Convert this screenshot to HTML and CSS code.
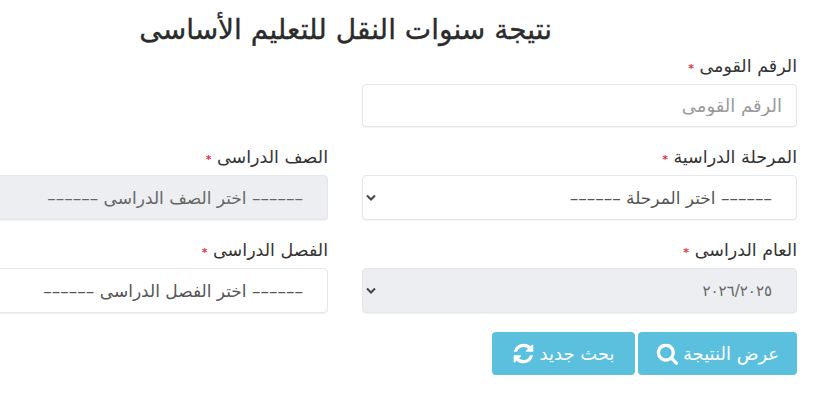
FILE: index.html
```html
<!DOCTYPE html>
<html lang="ar" dir="rtl">
  <head>
    <meta charset="UTF-8" />
    <title>نتيجة سنوات النقل للتعليم الأساسى</title>
    <link rel="stylesheet" href="styles.css">
  </head>
  <body>
    <form class="result-form">
      <h1 class="title">نتيجة سنوات النقل للتعليم الأساسى</h1>
      <div class="fields">
        <!-- الرقم القومى -->
        <div class="field">
          <label>الرقم القومى <span class="req">*</span></label>
          <input class="control" type="text" placeholder="الرقم القومى">
        </div>
        <div class="field"></div>

        <!-- المرحلة / الصف -->
        <div class="field">
          <label>المرحلة الدراسية <span class="req">*</span></label>
          <div class="select-wrap">
            <select class="control tall">
              <option>–––––– اختر المرحلة ––––––</option>
            </select>
            <svg class="chevron" viewBox="0 0 10 7"><path d="M1 1.500 5 5.500 9 1.500" /></svg>
          </div>
        </div>
        <div class="field">
          <label>الصف الدراسى <span class="req">*</span></label>
          <select class="control tall" disabled>
            <option>–––––– اختر الصف الدراسى ––––––</option>
          </select>
        </div>

        <!-- العام / الفصل -->
        <div class="field">
          <label>العام الدراسى <span class="req">*</span></label>
          <div class="select-wrap">
            <select class="control tall year" disabled>
              <option>٢٠٢٦/٢٠٢٥</option>
            </select>
            <svg class="chevron" viewBox="0 0 10 7"><path d="M1 1.500 5 5.500 9 1.500" /></svg>
          </div>
        </div>
        <div class="field">
          <label>الفصل الدراسى <span class="req">*</span></label>
          <select class="control tall">
            <option>–––––– اختر الفصل الدراسى ––––––</option>
          </select>
        </div>
      </div>

      <div class="actions">
        <button class="btn show" type="button">
          عرض النتيجة
          <svg class="icon" viewBox="0 0 1792 1792"><path d="M1216 832q0-185-131.500-316.500t-316.500-131.500-316.500 131.500-131.500 316.500 131.500 316.500 316.500 131.500 316.500-131.500 131.500-316.500zm512 832q0 52-38 90t-90 38q-54 0-90-38l-343-342q-179 124-399 124-143 0-273.500-55.500t-225-150-150-225-55.500-273.500 55.500-273.500 150-225 225-150 273.500-55.500 273.500 55.500 225 150 150 225 55.500 273.500q0 220-124 399l343 343q37 37 37 90z" /></svg>
        </button>
        <button class="btn reset" type="button">
          بحث جديد
          <svg class="icon" viewBox="0 0 1792 1792"><path d="M1639 1056q0 5-1 7-64 268-268 434.500t-478 166.500q-146 0-282.500-55t-243.500-157l-129 129q-19 19-45 19t-45-19-19-45v-448q0-26 19-45t45-19h448q26 0 45 19t19 45-19 45l-137 137q71 66 161 102t187 36q134 0 250-65t186-179q11-17 53-117 8-23 30-23h192q13 0 22.500 9.500t9.500 22.500zm25-800v448q0 26-19 45t-45 19h-448q-26 0-45-19t-19-45 19-45l138-138q-148-137-349-137-134 0-250 65t-186 179q-11 17-53 117-8 23-30 23h-199q-13 0-22.500-9.500t-9.500-22.500v-7q65-268 270-434.500t480-166.500q146 0 284 55.500t245 156.500l130-129q19-19 45-19t45 19 19 45z" /></svg>
        </button>
      </div>
    </form>
  </body>
</html>
```

FILE: styles.css
```css
html,
body {
  overflow: hidden;
}
body {
  font-family: 'DejaVu Sans', sans-serif;
  margin: 0;
  height: 400px;
  background: #fff;
  color: #333;
}
.result-form {
  padding: 0 43px 0 0;
}
.title {
  font-size: 28px;
  line-height: 36px;
  font-weight: normal;
  color: #2b2b2b;
  -webkit-text-stroke: .35px #2b2b2b;
  box-sizing: border-box;
  height: 59px;
  margin: 0 245px 0 0;
  padding-top: 12px;
  white-space: nowrap;
}
.fields {
  display: grid;
  grid-template-columns: 435px 435px;
  column-gap: 34px;
  row-gap: 23px;
}
.field label {
  display: block;
  font-size: 17.5px;
  line-height: 14px;
  height: 18px;
  margin-bottom: 7px;
  white-space: nowrap;
}
.req {
  color: #dc3545;
  font-size: 11px;
  font-weight: bold;
}
.control {
  display: block;
  box-sizing: border-box;
  width: 100%;
  height: 43px;
  padding: 0 14px;
  font-family: inherit;
  font-size: 18px;
  color: #555;
  background: #fff;
  border: 1px solid #e4e7ea;
  border-radius: 4px;
  box-shadow: 0 1px 1px rgba(0, 0, 0, .05);
}
.control::placeholder {
  color: #9a9a9a;
}
.tall {
  height: 45px;
  appearance: none;
  opacity: 1;
  font-size: 17px;
  padding: 0 24px;
}
.tall:disabled {
  background: #eceef1;
  color: #666;
}
.year {
  font-size: 15px;
}
.select-wrap {
  position: relative;
}
.chevron {
  position: absolute;
  left: 4px;
  top: 19px;
  width: 10px;
  height: 7px;
  fill: none;
  stroke: #444;
  stroke-width: 2;
}
.actions {
  display: flex;
  gap: 3px;
  margin-top: 19px;
}
.btn {
  display: flex;
  align-items: center;
  justify-content: center;
  gap: 4px;
  height: 43px;
  padding: 0;
  font-family: inherit;
  font-size: 18px;
  color: #fff;
  background: #5bc0de;
  border: none;
  border-radius: 4px;
}
.show {
  width: 159px;
}
.reset {
  width: 143px;
}
.icon {
  width: 23px;
  height: 23px;
  fill: #fff;
}
```
